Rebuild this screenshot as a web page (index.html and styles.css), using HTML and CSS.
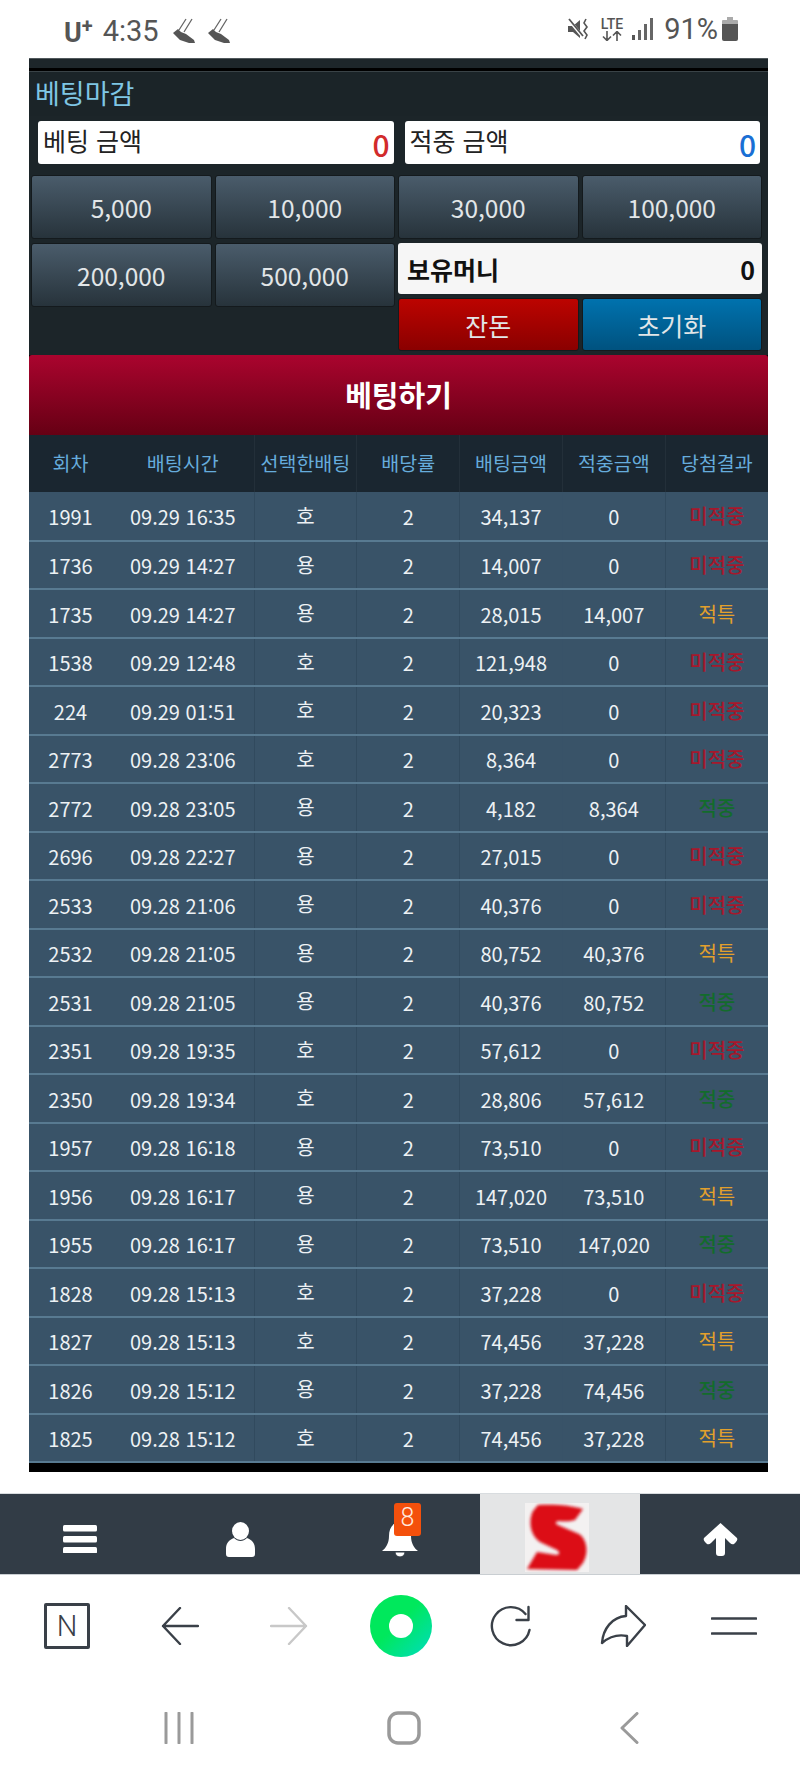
FILE: index.html
```html
<!DOCTYPE html>
<html lang="ko">
<head>
    <meta charset="UTF-8">
    <meta name="viewport" content="width=device-width, initial-scale=1.0">
    <title>베팅</title>
    <link rel="stylesheet" href="styles.css">
</head>
<body>

<div class="status">
    <span class="carrier">U<sup>+</sup></span>
    <span class="clock">4:35</span>
    <svg class="shoe" width="24" height="26" viewBox="0 0 24 26"><path d="M14 1 7 12M20 1 12 14" fill="none" stroke="#666" stroke-width="1.3"/><path d="M1 15 6 11 9 14 14 16 22 22 23 25 17 25 8 22Z" fill="#555"/></svg>
    <svg class="shoe shoe-2" width="24" height="26" viewBox="0 0 24 26"><path d="M14 1 7 12M20 1 12 14" fill="none" stroke="#666" stroke-width="1.3"/><path d="M1 15 6 11 9 14 14 16 22 22 23 25 17 25 8 22Z" fill="#555"/></svg>
    <div class="status-right">
        <svg width="22" height="24" viewBox="0 0 22 24"><path d="M0 9H5L12 3V21L5 15H0Z" fill="#555"/><path d="M1 3 15 20" stroke="#fff" stroke-width="3"/><path d="M1 2 15 19" stroke="#555" stroke-width="1.8"/><path d="M18 2 16 6 19 10 16 14 19 18 17 22" fill="none" stroke="#555" stroke-width="1.6"/></svg>
        <div class="lte">
            <span>LTE</span>
            <svg width="22" height="10" viewBox="0 0 22 10"><path d="M6 0V9M2 5.5 6 9.5 10 5.5M16 10V1M12 4.500 16 .5 20 4.500" fill="none" stroke="#555" stroke-width="1.6"/></svg>
        </div>
        <svg class="signal" width="21" height="22" viewBox="0 0 21 22"><rect y="17" width="3" height="5" fill="#555"/><rect x="6" y="12" width="3" height="10" fill="#666"/><rect x="12" y="6" width="3" height="16" fill="#666"/><rect x="18" width="3" height="22" fill="#666"/></svg>
        <span class="battery-text">91%</span>
        <svg class="battery" width="16" height="24" viewBox="0 0 16 24"><path d="M5 0H11V3H5Z" fill="#aaa"/><path d="M1 3H15Q16 3 16 4V7H0V4Q0 3 1 3Z" fill="#aaa"/><path d="M0 7H16V22Q16 24 14 24H2Q0 24 0 22Z" fill="#555"/></svg>
    </div>
</div>

<div class="frame">
    <div class="strip"></div>
    <h2 class="round-title">베팅마감</h2>
    <div class="panel">
        <div class="bet-boxes">
            <div class="bet-box"><span>베팅 금액</span><b class="red">0</b></div>
            <div class="bet-box"><span>적중 금액</span><b class="blue">0</b></div>
        </div>
        <div class="amounts">
            <button class="btn">5,000</button>
            <button class="btn">10,000</button>
            <button class="btn">30,000</button>
            <button class="btn">100,000</button>
            <button class="btn btn-tall">200,000</button>
            <button class="btn btn-tall">500,000</button>
            <div class="balance"><b>보유머니</b><b>0</b></div>
            <button class="btn btn-red">잔돈</button>
            <button class="btn btn-blue">초기화</button>
        </div>
    </div>
    <button class="bet-submit">베팅하기</button>

    <table class="history">
        <thead>
            <tr>
                <th class="c-round">회차</th>
                <th class="c-time">배팅시간</th>
                <th class="c-line">선택한배팅</th>
                <th class="c-line">배당률</th>
                <th class="c-line">배팅금액</th>
                <th class="c-line">적중금액</th>
                <th class="c-line">당첨결과</th>
            </tr>
        </thead>
        <tbody>
            <tr><td>1991</td><td>09.29 16:35</td><td class="pick">호</td><td>2</td><td>34,137</td><td>0</td><td class="lose">미적중</td></tr>
            <tr><td>1736</td><td>09.29 14:27</td><td class="pick">용</td><td>2</td><td>14,007</td><td>0</td><td class="lose">미적중</td></tr>
            <tr><td>1735</td><td>09.29 14:27</td><td class="pick">용</td><td>2</td><td>28,015</td><td>14,007</td><td class="push">적특</td></tr>
            <tr><td>1538</td><td>09.29 12:48</td><td class="pick">호</td><td>2</td><td>121,948</td><td>0</td><td class="lose">미적중</td></tr>
            <tr><td>224</td><td>09.29 01:51</td><td class="pick">호</td><td>2</td><td>20,323</td><td>0</td><td class="lose">미적중</td></tr>
            <tr><td>2773</td><td>09.28 23:06</td><td class="pick">호</td><td>2</td><td>8,364</td><td>0</td><td class="lose">미적중</td></tr>
            <tr><td>2772</td><td>09.28 23:05</td><td class="pick">용</td><td>2</td><td>4,182</td><td>8,364</td><td class="win">적중</td></tr>
            <tr><td>2696</td><td>09.28 22:27</td><td class="pick">용</td><td>2</td><td>27,015</td><td>0</td><td class="lose">미적중</td></tr>
            <tr><td>2533</td><td>09.28 21:06</td><td class="pick">용</td><td>2</td><td>40,376</td><td>0</td><td class="lose">미적중</td></tr>
            <tr><td>2532</td><td>09.28 21:05</td><td class="pick">용</td><td>2</td><td>80,752</td><td>40,376</td><td class="push">적특</td></tr>
            <tr><td>2531</td><td>09.28 21:05</td><td class="pick">용</td><td>2</td><td>40,376</td><td>80,752</td><td class="win">적중</td></tr>
            <tr><td>2351</td><td>09.28 19:35</td><td class="pick">호</td><td>2</td><td>57,612</td><td>0</td><td class="lose">미적중</td></tr>
            <tr><td>2350</td><td>09.28 19:34</td><td class="pick">호</td><td>2</td><td>28,806</td><td>57,612</td><td class="win">적중</td></tr>
            <tr><td>1957</td><td>09.28 16:18</td><td class="pick">용</td><td>2</td><td>73,510</td><td>0</td><td class="lose">미적중</td></tr>
            <tr><td>1956</td><td>09.28 16:17</td><td class="pick">용</td><td>2</td><td>147,020</td><td>73,510</td><td class="push">적특</td></tr>
            <tr><td>1955</td><td>09.28 16:17</td><td class="pick">용</td><td>2</td><td>73,510</td><td>147,020</td><td class="win">적중</td></tr>
            <tr><td>1828</td><td>09.28 15:13</td><td class="pick">호</td><td>2</td><td>37,228</td><td>0</td><td class="lose">미적중</td></tr>
            <tr><td>1827</td><td>09.28 15:13</td><td class="pick">호</td><td>2</td><td>74,456</td><td>37,228</td><td class="push">적특</td></tr>
            <tr><td>1826</td><td>09.28 15:12</td><td class="pick">용</td><td>2</td><td>37,228</td><td>74,456</td><td class="win">적중</td></tr>
            <tr><td>1825</td><td>09.28 15:12</td><td class="pick">호</td><td>2</td><td>74,456</td><td>37,228</td><td class="push">적특</td></tr>
        </tbody>
    </table>
</div>

<nav class="site-nav">
    <div class="site-cell">
        <svg width="34" height="28" viewBox="0 0 34 28"><rect width="34" height="6.500" rx="1.500" fill="#fff"/><rect y="11" width="34" height="6.500" rx="1.500" fill="#fff"/><rect y="22" width="34" height="6.500" rx="1.500" fill="#fff"/></svg>
    </div>
    <div class="site-cell">
        <svg width="29" height="35" viewBox="0 0 29 35"><ellipse cx="14.500" cy="9" rx="8.500" ry="9" fill="#fff"/><path d="M8 16C3 18 0 21 0 27V32Q0 35 3 35H26Q29 35 29 32V27C29 21 26 18 21 16 17 20 12 20 8 16Z" fill="#fff"/></svg>
    </div>
    <div class="site-cell">
        <div class="bell">
            <svg width="36" height="36" viewBox="0 0 36 36"><path d="M18 0C10 2 7 8 7 15 7 22 4 27 0 30H36C32 27 29 22 29 15 29 8 26 2 18 0Z" fill="#fff"/><path d="M13 31A5 5 0 0 0 23 31Z" fill="#fff" stroke="#323c46"/></svg>
            <span class="badge">8</span>
        </div>
    </div>
    <div class="site-cell site-logo">
        <svg width="64" height="69" viewBox="0 0 64 69">
            <defs><filter id="soft" x="-10%" y="-10%" width="120%" height="120%"><feGaussianBlur stdDeviation="1.700"/></filter></defs>
            <rect width="64" height="69" fill="#f3f1f1"/>
            <path d="M13 2C28 1 46 2 58 6L50 17C44 19 38 18 33 18 30 19 30 21 33 22L54 31C62 36 64 50 58 60L52 67 2 66 12 49 31 52C35 52 35 49 32 47L17 40C5 34 3 18 8 8Z" fill="#dc0f12" filter="url(#soft)"/>
        </svg>
    </div>
    <div class="site-cell">
        <svg width="35" height="33" viewBox="0 0 35 33"><path d="M17.500 0 34 15Q35 17 33 19L31 21Q29 22 27 20L22 15V30Q22 33 19 33H16Q13 33 13 30V15L8 20Q6 22 4 21L2 19Q0 17 1 15Z" fill="#fff"/></svg>
    </div>
</nav>

<div class="browser-bar">
    <div class="tool">
        <div class="n-box">N</div>
    </div>
    <div class="tool">
        <svg class="tool-back" width="38" height="38" viewBox="0 0 38 38"><path d="M37 19H2M19 1 2 19 19 37" fill="none" stroke="#3a4048" stroke-width="2.400" stroke-linecap="round" stroke-linejoin="round"/></svg>
    </div>
    <div class="tool">
        <svg width="38" height="38" viewBox="0 0 38 38"><path d="M1 19H36M19 1 36 19 19 37" fill="none" stroke="#c8c8c8" stroke-width="2.400" stroke-linecap="round" stroke-linejoin="round"/></svg>
    </div>
    <div class="tool">
        <div class="green-dot"></div>
    </div>
    <div class="tool">
        <svg class="tool-reload" width="45" height="44" viewBox="0 0 44 44"><path d="M37 10A19 19 0 1 0 41 26" fill="none" stroke="#3a4048" stroke-width="2.400" stroke-linecap="round"/><path d="M40 3V16H28" fill="none" stroke="#3a4048" stroke-width="2.400" stroke-linecap="round" stroke-linejoin="round"/></svg>
    </div>
    <div class="tool">
        <svg width="46" height="42" viewBox="0 0 46 42"><path d="M26 1 45 20 27 41V31C17 29 9 32 2 38 3 24 12 12 26 11Z" fill="none" stroke="#3a4048" stroke-width="2.400" stroke-linejoin="round"/></svg>
    </div>
    <div class="tool">
        <svg width="46" height="18" viewBox="0 0 46 18"><path d="M1 1.500H45M1 16.500H45" stroke="#3a4048" stroke-width="2.600" stroke-linecap="round"/></svg>
    </div>
</div>

<div class="soft-keys">
    <div class="soft-key">
        <svg width="30" height="32" viewBox="0 0 30 32"><path d="M2 1V31M15 1V31M28 1V31" stroke="#9a9a9a" stroke-width="3" stroke-linecap="round"/></svg>
    </div>
    <div class="soft-key">
        <svg width="34" height="34" viewBox="0 0 34 34"><rect x="2" y="2" width="30" height="30" rx="9" fill="none" stroke="#9a9a9a" stroke-width="3.500"/></svg>
    </div>
    <div class="soft-key">
        <svg width="20" height="32" viewBox="0 0 20 32"><path d="M18 1.500 3 16 18 30.500" fill="none" stroke="#9a9a9a" stroke-width="3" stroke-linecap="round" stroke-linejoin="round"/></svg>
    </div>
</div>

</body>
</html>
```

FILE: styles.css
```css
* {
    box-sizing: border-box;
}
body {
    margin: 0;
    background: #fff;
    font-family: "Noto Sans CJK KR", "Noto Sans", sans-serif;
}

/* phone status bar */
.status {
    display: flex;
    align-items: center;
    height: 58px;
    padding: 0 62px 0 64px;
    color: #555;
    font-family: Roboto, sans-serif;
}
.carrier {
    font-size: 27px;
    font-weight: 700;
    line-height: 30px;
    margin-top: 7px;
}
.carrier sup {
    font-size: 20px;
    line-height: 0;
    vertical-align: 9px;
}
.clock {
    font-size: 29px;
    margin-left: 10px;
    margin-top: 3px;
}
.shoe {
    margin-left: 13px;
    margin-top: 3px;
}
.shoe-2 {
    margin-left: 11px;
}
.status-right {
    display: flex;
    align-items: center;
    margin-left: auto;
}
.lte {
    display: flex;
    flex-direction: column;
    align-items: center;
    margin-left: 11px;
    font-size: 14px;
    font-weight: 500;
    line-height: 13px;
}
.signal {
    margin-left: 9px;
}
.battery-text {
    font-size: 29px;
    margin-left: 11px;
}
.battery {
    margin-left: 4px;
}

/* betting frame */
.frame {
    width: 739px;
    margin-left: 29px;
    background: #000;
    padding-bottom: 9px;
}
.strip {
    height: 13px;
    background: linear-gradient(#1d262a 0, #1d262a 9px, #000 9px);
    border-top: 1px solid #50585c;
}
.round-title {
    height: 45px;
    margin: 0;
    padding-left: 6px;
    background: #1b2428;
    border-top: 1px solid #3a4347;
    color: #7fc6e4;
    font-size: 27px;
    font-weight: 400;
    line-height: 42px;
}
.panel {
    padding: 5px 6px 4px 2px;
    background: #1c2529;
}
.bet-boxes {
    display: flex;
    gap: 11px;
    height: 43px;
    margin: 0 2px 11px 7px;
}
.bet-box {
    flex: 1;
    display: flex;
    justify-content: space-between;
    padding: 0 4px 0 5px;
    background: #fff;
    border-radius: 3px;
    color: #222;
    font-size: 25px;
    line-height: 38px;
}
.bet-box b {
    font-size: 30px;
    font-weight: 500;
    line-height: 46px;
}
.red {
    color: #d22b2b;
}
.blue {
    color: #1a6fd4;
}
.amounts {
    display: grid;
    grid-template-columns: repeat(4, 1fr);
    grid-template-rows: 64px 51px 53px;
    gap: 4px 3px;
}
.btn {
    padding: 0;
    border: 1px solid #141a1d;
    border-radius: 3px;
    background: linear-gradient(#4a5c6b, #27333b);
    color: #e2e6e8;
    font-family: "Noto Sans CJK KR", "Noto Sans", sans-serif;
    font-size: 24.500px;
}
.btn-tall {
    grid-row: span 2;
    height: 64px;
}
.balance {
    grid-column: span 2;
    display: flex;
    justify-content: space-between;
    align-items: center;
    padding: 0 7px 0 9px;
    background: #f6f6f6;
    border-radius: 3px;
    color: #111;
    font-size: 25px;
}
.btn-red {
    grid-column: 3;
    background: linear-gradient(#bc0400, #8a0000);
    font-size: 25px;
}
.btn-blue {
    background: linear-gradient(#0072ae, #00527f);
    font-size: 25px;
}
.bet-submit {
    display: block;
    width: 100%;
    height: 80px;
    padding: 0 0 2px;
    border: none;
    border-radius: 3px 3px 0 0;
    background: linear-gradient(#aa042e, #660014);
    color: #fff;
    font-family: "Noto Sans CJK KR", "Noto Sans", sans-serif;
    font-size: 29px;
    font-weight: 700;
}

/* history table */
.history {
    width: 100%;
    border-collapse: collapse;
    table-layout: fixed;
}
.history th {
    height: 57px;
    padding: 0 0 2px;
    background: #1a2630;
    color: #66acdc;
    font-size: 19.500px;
    font-weight: 400;
}
.c-round {
    width: 83px;
}
.c-time {
    width: 142px;
}
.c-line {
    border-left: 1px solid #232f39;
}
.history td {
    height: 48.500px;
    padding: 3px 0 0;
    background: #395368;
    border-bottom: 2px solid #587a91;
    color: #edf1f4;
    font-size: 20px;
    line-height: 24px;
    text-align: center;
}
.history td:nth-child(n+3) {
    border-left: 1px solid #314a5e;
}
.history td:nth-child(6) {
    border-left-color: #385268;
}
.pick {
    padding-top: 3px !important;
    padding-bottom: 3px !important;
}
.lose {
    color: #a5182c !important;
    font-weight: 500;
}
.push {
    color: #e2a02c !important;
}
.win {
    color: #136b2c !important;
    font-weight: 500;
}
.lose, .push, .win {
    padding-top: 3px !important;
    padding-bottom: 2px !important;
}

/* site bottom menu */
.site-nav {
    display: grid;
    grid-template-columns: repeat(5, 160px);
    height: 82px;
    margin-top: 21px;
    background: #323c46;
    border-top: 1px solid #d8dcdf;
    border-bottom: 1px solid #c9ced2;
}
.site-cell {
    display: flex;
    justify-content: center;
    align-items: center;
    padding-top: 10px;
}
.bell {
    position: relative;
    height: 36px;
}
.badge {
    position: absolute;
    left: 12px;
    top: -18px;
    width: 27px;
    height: 33px;
    background: #f4500c;
    border-radius: 3px;
    color: #ffe9df;
    font-family: Roboto, sans-serif;
    font-size: 25px;
    font-weight: 300;
    line-height: 30px;
    text-align: center;
}
.site-logo {
    padding: 6px 7px 0 0;
    background: #e4e5e6;
}

/* browser toolbar */
.browser-bar {
    display: flex;
    justify-content: space-between;
    align-items: center;
    height: 102px;
    padding: 0 43px 0 44px;
}
.tool {
    display: flex;
    justify-content: center;
    width: 46px;
}
.tool-back {
    margin-left: 4px;
}
.tool-reload {
    margin-left: -3px;
}
.n-box {
    width: 46px;
    height: 46px;
    border: 3px solid #3a4048;
    border-radius: 2px;
    color: #3a4048;
    font-family: Roboto, sans-serif;
    font-size: 29px;
    font-weight: 300;
    line-height: 40px;
    text-align: center;
}
.green-dot {
    flex: none;
    width: 62px;
    height: 62px;
    margin-left: 1px;
    border: 19px solid transparent;
    border-radius: 50%;
    background: linear-gradient(#fff, #fff) padding-box, linear-gradient(135deg, #00e85c 45%, #00dcc0) border-box;
}

/* android keys */
.soft-keys {
    display: flex;
    height: 100px;
    padding: 2px 59px 0 67px;
}
.soft-key {
    flex: 1;
    display: flex;
    justify-content: center;
    align-items: center;
}
```
